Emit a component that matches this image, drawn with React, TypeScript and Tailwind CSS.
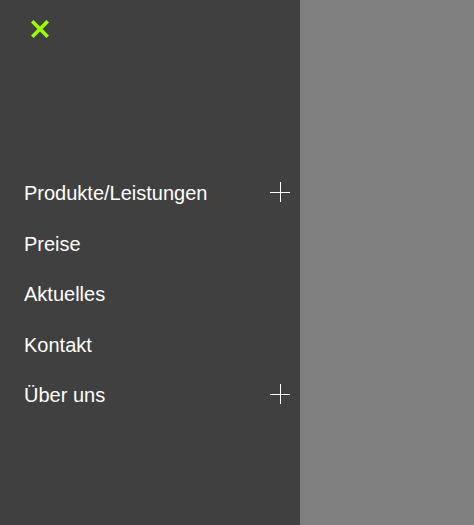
const items = [
  { label: 'Produkte/Leistungen', sub: true },
  { label: 'Preise', sub: false },
  { label: 'Aktuelles', sub: false },
  { label: 'Kontakt', sub: false },
  { label: 'Über uns', sub: true },
];

function PlusIcon() {
  return (
    <svg width="20" height="20" viewBox="0 0 20 20" className="block -mt-[3px]">
      <path d="M0 10.5H20M10.5 0V20" stroke="#ffffff" strokeWidth="1" />
    </svg>
  );
}

export default function App() {
  return (
    <div className="flex h-[525px] w-full bg-[#808080] font-['Liberation_Sans',Arial,sans-serif]">
      <nav className="w-[300px] h-full bg-[#404040] flex flex-col">
        <div className="pl-[31px] pt-[20px] h-[168px]">
          <svg width="18" height="18" viewBox="0 0 18 18" className="block">
            <path d="M2.5 2.5L15.5 15.5M15.5 2.5L2.5 15.5" stroke="#99ff00" strokeWidth="3.6" strokeLinecap="square" />
          </svg>
        </div>
        <ul className="flex flex-col">
          {items.map((item) => (
            <li key={item.label} className="h-[50.5px] flex items-center justify-between pl-[24px] pr-[10px]">
              <span className="text-[20px] text-white leading-none">{item.label}</span>
              {item.sub && <PlusIcon />}
            </li>
          ))}
        </ul>
      </nav>
      <div className="flex-1" />
    </div>
  );
}
